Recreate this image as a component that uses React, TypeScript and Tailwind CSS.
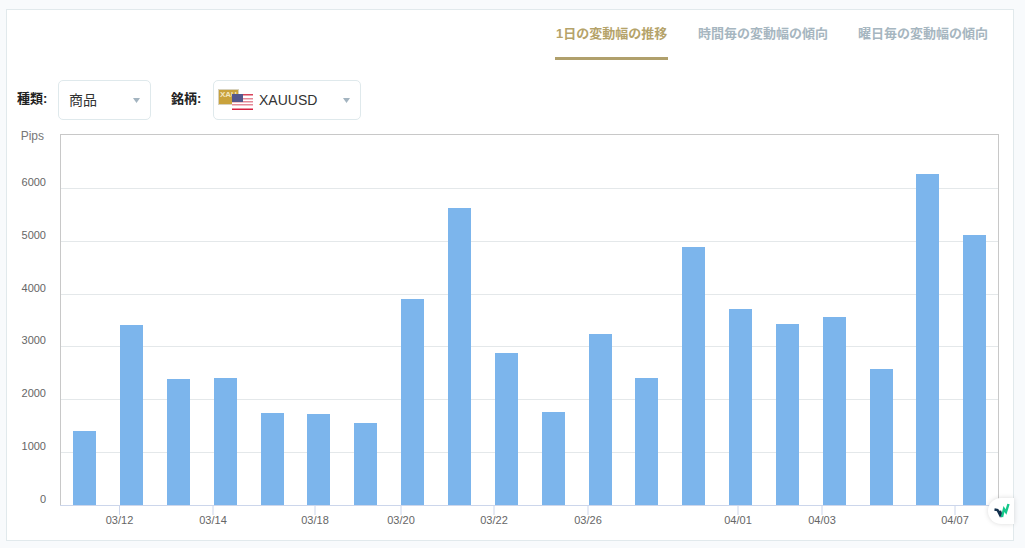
const jp = '"Liberation Sans", "Noto Sans CJK JP", sans-serif';

const bars = [
  [73, 431], [120, 325], [167, 379], [214, 378], [261, 413],
  [307, 414], [354, 423], [401, 299], [448, 208], [495, 353],
  [542, 412], [589, 334], [635, 378], [682, 247], [729, 309],
  [776, 324], [823, 317], [870, 369], [916, 174], [963, 235],
];
const yTicks = [
  [6000, 188], [5000, 241], [4000, 294], [3000, 346], [2000, 399], [1000, 452],
];
const xTicks = [
  ['03/12', 119.5], ['03/14', 213], ['03/18', 315], ['03/20', 401], ['03/22', 494],
  ['03/26', 588], ['04/01', 738], ['04/03', 822], ['04/07', 955],
] as const;

// drawn in page coordinates, the viewBox lines them up with the card
const Chart = () => (
  <svg viewBox="7 125 1006 415" className="block w-[1006px] h-[415px]">
    <rect x="60.5" y="134.5" width="938" height="371" fill="none" stroke="#c8c8c8" />
    {yTicks.map(([label, y]) => (
      <g key={label}>
        <line x1="61" x2="998" y1={y + 0.5} y2={y + 0.5} stroke="#e4e8ea" />
        <text x="46" y={y - 2} textAnchor="end" fontSize="11" fill="#666666" fontFamily="Liberation Sans">{label}</text>
      </g>
    ))}
    <text x="46" y="503" textAnchor="end" fontSize="11" fill="#666666" fontFamily="Liberation Sans">0</text>
    <text x="44" y="140" textAnchor="end" fontSize="12" fill="#777777" fontFamily="Liberation Sans">Pips</text>
    {bars.map(([x, top]) => (
      <rect key={x} x={x} y={top} width="23" height={505 - top} fill="#7cb5ec" />
    ))}
    <line x1="60" x2="999" y1="505.5" y2="505.5" stroke="#ccd6eb" />
    {xTicks.map(([label, x]) => (
      <g key={label}>
        <line x1={x} x2={x} y1="506" y2="515" stroke="#ccd6eb" />
        <text x={x} y="524" textAnchor="middle" fontSize="11" fill="#666666" fontFamily="Liberation Sans">{label}</text>
      </g>
    ))}
  </svg>
);

const Caret = () => (
  <svg viewBox="0 0 7 5" className="w-[7px] h-[5px]">
    <path d="M0 0h7L3.5 5z" fill="#a3b4c0" />
  </svg>
);

const PairIcon = () => (
  <svg viewBox="0 0 36 22" className="w-[36px] h-[22px]">
    <rect x="0.5" y="0.5" width="20" height="15" fill="#c9a23c" stroke="#d8d2bd" />
    <text x="2" y="8" fontSize="8" fontWeight="700" fill="#f3e7c0" fontFamily="Liberation Sans">XAU</text>
    <rect x="14" y="5" width="21" height="16" fill="#fff" />
    <rect x="14" y="5" width="21" height="1.5" fill="#d8435a" />
    <rect x="14" y="9" width="21" height="1.5" fill="#e58a98" />
    <rect x="14" y="12" width="21" height="1.5" fill="#e58a98" />
    <rect x="14" y="15" width="21" height="1.5" fill="#e58a98" />
    <rect x="14" y="19.5" width="21" height="1.5" fill="#d8203f" />
    <rect x="14" y="5" width="11" height="8" fill="#55588c" />
  </svg>
);

const App = () => (
  <div className="h-[548px] bg-[#f8fafc] pt-[9px] pl-[6px] overflow-hidden relative" style={{ fontFamily: jp }}>
    <div className="w-[1008px] h-[532px] bg-white border border-[#e1e9ec]">
      <div className="flex justify-end gap-[30px] pr-[25px] h-[51px]">
        <div className="w-[113px] h-[50px] pt-[14px] pl-[1px] border-b-[3px] border-[#b0a06c] text-[13px] leading-[19px] font-bold text-[#b5a36a]">1日の変動幅の推移</div>
        <div className="pt-[14px] text-[13px] leading-[19px] font-bold text-[#a6b6c0]">時間毎の変動幅の傾向</div>
        <div className="pt-[14px] text-[13px] leading-[19px] font-bold text-[#a6b6c0]">曜日毎の変動幅の傾向</div>
      </div>
      <div className="flex items-center h-[40px] mt-[19px] pl-[10px]">
        <span className="text-[13px] font-bold text-[#222222] w-[41px] -mt-[2px]">種類:</span>
        <div className="flex items-center justify-between w-[93px] h-[40px] pl-[10px] pr-[10px] border border-[#dfe9ec] rounded-[5px] text-[14px] text-[#333333]">
          商品
          <Caret />
        </div>
        <span className="text-[13px] font-bold text-[#222222] w-[42px] ml-[20px] -mt-[2px]">銘柄:</span>
        <div className="flex items-center justify-between w-[148px] h-[40px] pl-[4px] pr-[10px] border border-[#dfe9ec] rounded-[5px] text-[14px] text-[#333333]">
          <span className="flex items-center gap-[5px]">
            <PairIcon />
            XAUUSD
          </span>
          <Caret />
        </div>
      </div>
      <div className="mt-[5px]">
        <Chart />
      </div>
    </div>
    {/* widget badge sitting over the chart corner */}
    <div className="absolute left-[988px] top-[498px] w-[26px] h-[26px] bg-white rounded-l-full shadow-[0_0_5px_rgba(0,0,0,0.15)]">
      <svg viewBox="0 0 16 15" className="absolute left-[6px] top-[5px] w-[16px] h-[15px]" fill="none" strokeWidth="2.4">
        <path d="M0.5 6.500L3.500 7L5.500 11L6 8L8 14" stroke="#12304d" />
        <path d="M8 14L10 6L12 9L14.500 1" stroke="#14c88a" />
      </svg>
    </div>
  </div>
);

export default App;
